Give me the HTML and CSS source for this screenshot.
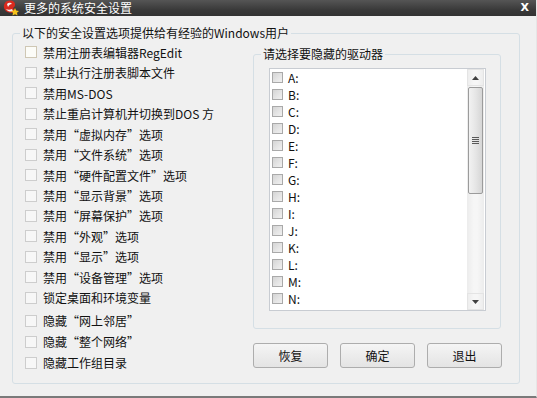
FILE: index.html
```html
<!DOCTYPE html>
<html>
<head>
<meta charset="utf-8">
<link rel="stylesheet" href="styles.css">
</head>
<body>
<div class="window">
  <div class="titlebar">
    <svg class="appicon" width="18" height="16" viewBox="0 0 18 16">
      <path d="M3 3 C5 0 10 0 12 2 C14 4 13 7 11 8 L13 12 C10 13 6 13 4 11 C2 9 1 6 3 3 Z" fill="#d92a1e"/>
      <path d="M5 4 C7 2 9 3 10 4 C8 4 7 5 6 7 Z" fill="#f4f4f4"/>
      <path d="M4 9 C6 10 8 10 10 9 L11 11 C9 12 6 12 4 9 Z" fill="#f2f2f2"/>
      <path d="M13 8 L14.2 10.6 L17 11 L15 12.8 L15.5 15.6 L13 14.3 L10.5 15.6 L11 12.8 L9 11 L11.8 10.6 Z" fill="#f5c21a"/>
    </svg>
    <span class="title">更多的系统安全设置</span>
    <span class="close">X</span>
  </div>
  <div class="body">
    <fieldset class="group main">
      <legend>以下的安全设置选项提供给有经验的Windows用户</legend>
      <div class="cols">
        <div class="options">
          <div class="opt"><span class="cb first"></span><span>禁用注册表编辑器RegEdit</span></div>
          <div class="opt"><span class="cb"></span><span>禁止执行注册表脚本文件</span></div>
          <div class="opt"><span class="cb"></span><span>禁用MS-DOS</span></div>
          <div class="opt"><span class="cb"></span><span>禁止重启计算机并切换到DOS 方</span></div>
          <div class="opt"><span class="cb"></span><span>禁用“虚拟内存”选项</span></div>
          <div class="opt"><span class="cb"></span><span>禁用“文件系统”选项</span></div>
          <div class="opt"><span class="cb"></span><span>禁用“硬件配置文件”选项</span></div>
          <div class="opt"><span class="cb"></span><span>禁用“显示背景”选项</span></div>
          <div class="opt"><span class="cb"></span><span>禁用“屏幕保护”选项</span></div>
          <div class="opt"><span class="cb"></span><span>禁用“外观”选项</span></div>
          <div class="opt"><span class="cb"></span><span>禁用“显示”选项</span></div>
          <div class="opt"><span class="cb"></span><span>禁用“设备管理”选项</span></div>
          <div class="opt"><span class="cb"></span><span>锁定桌面和环境变量</span></div>
          <div class="opt tall gapped"><span class="cb"></span><span>隐藏“网上邻居”</span></div>
          <div class="opt tall"><span class="cb"></span><span>隐藏“整个网络”</span></div>
          <div class="opt tall"><span class="cb"></span><span>隐藏工作组目录</span></div>
        </div>
        <div class="right">
          <fieldset class="group drives">
            <legend>请选择要隐藏的驱动器</legend>
            <div class="listbox">
              <div class="items">
                <div class="item"><span class="dcb"></span>A:</div>
                <div class="item"><span class="dcb"></span>B:</div>
                <div class="item"><span class="dcb"></span>C:</div>
                <div class="item"><span class="dcb"></span>D:</div>
                <div class="item"><span class="dcb"></span>E:</div>
                <div class="item"><span class="dcb"></span>F:</div>
                <div class="item"><span class="dcb"></span>G:</div>
                <div class="item"><span class="dcb"></span>H:</div>
                <div class="item"><span class="dcb"></span>I:</div>
                <div class="item"><span class="dcb"></span>J:</div>
                <div class="item"><span class="dcb"></span>K:</div>
                <div class="item"><span class="dcb"></span>L:</div>
                <div class="item"><span class="dcb"></span>M:</div>
                <div class="item"><span class="dcb"></span>N:</div>
              </div>
              <div class="scrollbar">
                <div class="sbtn"><svg width="7" height="4" viewBox="0 0 7 4"><path d="M0 4 L3.5 0 L7 4 Z" fill="#404040"/></svg></div>
                <div class="thumb"><div class="grip"></div></div>
                <div class="track"></div>
                <div class="sbtn"><svg width="7" height="4" viewBox="0 0 7 4"><path d="M0 0 L3.5 4 L7 0 Z" fill="#404040"/></svg></div>
              </div>
            </div>
          </fieldset>
          <div class="buttons">
            <button class="btn">恢复</button>
            <button class="btn">确定</button>
            <button class="btn">退出</button>
          </div>
        </div>
      </div>
    </fieldset>
  </div>
</div>
</body>
</html>
```
FILE: styles.css
```css
* { box-sizing: border-box; }
html, body { margin: 0; padding: 0; }
body {
  width: 537px;
  height: 398px;
  overflow: hidden;
  background: #f0f0f0;
  font-family: "Noto Sans CJK SC", "Noto Sans", sans-serif;
  font-size: 12px;
  color: #111;
}
.window {
  width: 537px;
  height: 398px;
  display: flex;
  flex-direction: column;
  background: #f0f0f0;
  border-bottom: 2px solid #7a7a7a;
  border-right: 1px solid #e6e6e6;
}
.titlebar {
  height: 16px;
  flex: none;
  display: flex;
  align-items: center;
  background: linear-gradient(#555555, #3a3a3a 60%, #333333);
  color: #fff;
}
.appicon { margin-left: 2px; margin-right: 4px; flex: none; }
.title { font-size: 12px; line-height: 16px; letter-spacing: 0; }
.close {
  margin-left: auto;
  margin-right: 7px;
  font-family: "DejaVu Sans", sans-serif;
  font-weight: bold;
  font-size: 11px;
  line-height: 16px;
}
.body { flex: 1; padding: 9px 0 0 12px; }
.group {
  margin: 0;
  padding: 0;
  border: 1px solid #d5dfe5;
  border-radius: 3px;
  min-width: 0;
}
.group legend {
  margin-left: 7px;
  padding: 0 2px;
  line-height: 16px;
  height: 16px;
  font-size: 12px;
}
.main { width: 508px; height: 359px; }
.cols { display: flex; }
.options { width: 240px; padding: 1.25px 0 0 12px; }
.opt {
  height: 20.45px;
  display: flex;
  align-items: center;
  white-space: nowrap;
}
.opt.tall { height: 21px; }
.opt.gapped { margin-top: 2.4px; }
.cb {
  width: 12px;
  height: 12px;
  flex: none;
  border: 1px solid #cdcdcd;
  background: #f7f7f7;
  margin-right: 6px;
}
.cb.first { border-color: #cfc7b4; background: #fcfcf8; }
.right { margin-left: 0; display: flex; flex-direction: column; }
.drives { width: 248px; height: 283px; margin-top: 5px; }
.listbox {
  margin: 6px 0 0 15px;
  width: 217px;
  height: 243px;
  border: 1px solid #c8ccd2;
  background: #fff;
  display: flex;
  overflow: hidden;
}
.items { flex: 1; padding-left: 2px; }
.item {
  height: 17px;
  display: flex;
  align-items: center;
  line-height: 17px;
}
.dcb {
  width: 11px;
  height: 11px;
  flex: none;
  border: 1px solid #a9a9a9;
  background: linear-gradient(135deg, #d4d4d4, #e6e6e6 60%, #f0f0f0);
  margin-right: 5px;
}
.scrollbar {
  width: 17px;
  flex: none;
  margin-right: 1px;
  display: flex;
  flex-direction: column;
  background: linear-gradient(90deg, #ececec, #f6f6f6 40%, #f6f6f6 60%, #ececec);
}
.sbtn {
  height: 17px;
  flex: none;
  display: flex;
  align-items: center;
  justify-content: center;
  border: 1px solid #e4e4e4;
}
.thumb {
  height: 107px;
  flex: none;
  margin: 1px 1px 0 1px;
  border: 1px solid #9b9b9b;
  border-radius: 2px;
  background: linear-gradient(90deg, #f2f2f2, #e6e6e6 50%, #d6d6d6);
  display: flex;
  align-items: center;
  justify-content: center;
}
.grip {
  width: 7px;
  height: 7px;
  background: repeating-linear-gradient(#5a5a5a 0 1px, transparent 1px 2px);
}
.track { flex: 1; }
.buttons {
  display: flex;
  gap: 12px;
  margin-top: 14px;
}
.btn {
  width: 75px;
  height: 25px;
  border: 1px solid #adadad;
  border-radius: 3px;
  background: linear-gradient(#f5f5f5, #ececec 50%, #e4e4e4);
  font-family: "Noto Sans CJK SC", sans-serif;
  font-size: 12px;
  color: #111;
  padding: 0;
  line-height: 23px;
}
.btn + .btn { margin-left: 0; }
```
